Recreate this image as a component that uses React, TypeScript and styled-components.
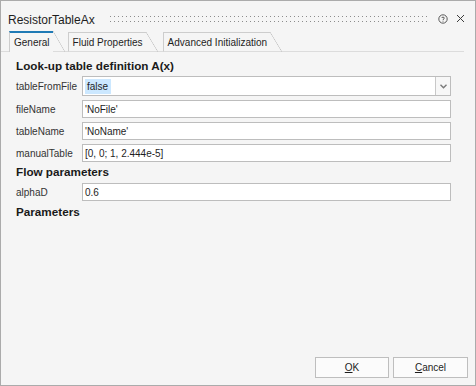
import React from "react";
import styled, { createGlobalStyle } from "styled-components";

const Global = createGlobalStyle`
  html, body { margin: 0; padding: 0; background: #f5f5f5; }
  * { box-sizing: border-box; }
`;

const Window = styled.div`
  width: 476px;
  height: 386px;
  border: 1px solid #ababab;
  background: #f5f5f5;
  display: flex;
  flex-direction: column;
  font-family: "Liberation Sans", Arial, sans-serif;
  font-size: 10px;
  color: #2b2b2b;
`;

const TitleBar = styled.div`
  height: 30px;
  padding: 5px 10px 0 7px;
  display: flex;
  align-items: center;
`;

const Title = styled.div`
  font-size: 12px;
  line-height: 14px;
  color: #1e1e1e;
  margin-top: 3px;
`;

const Grip = styled.svg`
  flex: 1;
  height: 6px;
  margin: 0 8px 0 15px;
`;

const IconBtn = styled.svg<{ $gap?: number }>`
  flex: 0 0 auto;
  margin-left: ${(p) => p.$gap ?? 0}px;
`;

const TabStrip = styled.div`
  height: 21px;
  padding-left: 8px;
  display: flex;
  align-items: flex-end;
  background: linear-gradient(#dcdcdc, #dcdcdc) no-repeat 0 100% / 463px 1px;
`;

const Tab = styled.div<{ $active?: boolean; $gap: number }>`
  position: relative;
  height: ${(p) => (p.$active ? 21 : 20)}px;
  padding: 0 3px 0 4px;
  margin-right: ${(p) => p.$gap}px;
  display: flex;
  align-items: center;
  white-space: nowrap;
  background: #f5f5f5;
  border-left: 1px solid #cdcdcd;
  border-top: ${(p) => (p.$active ? "2px solid #1f7ab5" : "1px solid #cdcdcd")};
  border-bottom: ${(p) => (p.$active ? "none" : "1px solid #dcdcdc")};
  color: #1e1e1e;
  padding-top: ${(p) => (p.$active ? 0 : 1)}px;

  &::after {
    content: "";
    position: absolute;
    top: ${(p) => (p.$active ? -2 : -1)}px;
    bottom: ${(p) => (p.$active ? 0 : -1)}px;
    right: -12px;
    width: 12px;
    background: linear-gradient(
      to top right,
      transparent calc(50% - 0.6px),
      #c6c6c6 50%,
      transparent calc(50% + 0.6px)
    );
  }
`;

const Content = styled.div`
  padding: 7px 24px 0 15px;
  display: flex;
  flex-direction: column;
  gap: 4px;
`;

const Heading = styled.div<{ $mt?: number; $mb?: number }>`
  font-size: 11.7px;
  font-weight: bold;
  line-height: 14px;
  color: #1a1a1a;
  margin-top: ${(p) => p.$mt ?? 0}px;
  margin-bottom: ${(p) => p.$mb ?? 0}px;
`;

const Row = styled.div`
  display: grid;
  grid-template-columns: 66px 1fr;
  align-items: center;
`;

const Label = styled.div`
  color: #333;
  white-space: nowrap;
`;

const Field = styled.div<{ $h: number }>`
  height: ${(p) => p.$h}px;
  border: 1px solid #bdbdbd;
  background: #fff;
  display: flex;
  align-items: center;
  padding-left: 2px;
  color: #1e1e1e;
`;

const Selected = styled.span`
  background: #cce8ff;
  padding: 2px 3px 2px 2px;
`;

const ComboText = styled.div`
  flex: 1;
  display: flex;
  align-items: center;
`;

const DropButton = styled.div`
  width: 15px;
  align-self: stretch;
  border-left: 1px solid #c8c8c8;
  display: flex;
  align-items: center;
  justify-content: center;
  background: #f7f7f7;
`;

const Footer = styled.div`
  margin-top: auto;
  padding: 0 7px 7px 0;
  display: flex;
  justify-content: flex-end;
  gap: 4px;
`;

const Button = styled.button<{ $w: number }>`
  width: ${(p) => p.$w}px;
  height: 21px;
  border: 1px solid #bebebe;
  background: #fbfbfb;
  font-family: "Liberation Sans", Arial, sans-serif;
  font-size: 10px;
  color: #1e1e1e;
  padding: 0;
`;

const rows: { label: string; value: string }[] = [
  { label: "fileName", value: "'NoFile'" },
  { label: "tableName", value: "'NoName'" },
  { label: "manualTable", value: "[0, 0; 1, 2.444e-5]" },
];

export default function App() {
  return (
    <>
      <Global />
      <Window>
        <TitleBar>
          <Title>ResistorTableAx</Title>
          <Grip>
            <defs>
              <pattern id="dots" width="4" height="5" patternUnits="userSpaceOnUse">
                <rect x="0" y="0" width="1" height="1" fill="#8c8c8c" />
              </pattern>
            </defs>
            <rect width="100%" height="6" fill="url(#dots)" />
          </Grip>
          <IconBtn width="10" height="10" viewBox="0 0 10 10">
            <circle cx="5" cy="5" r="4.2" fill="none" stroke="#4a4a4a" strokeWidth="0.9" />
            <path
              d="M3.6 4 C3.6 2.9 6.4 2.9 6.4 4 C6.4 4.9 5 4.9 5 6"
              fill="none"
              stroke="#4a4a4a"
              strokeWidth="0.9"
            />
            <rect x="4.55" y="6.7" width="0.9" height="0.9" fill="#4a4a4a" />
          </IconBtn>
          <IconBtn $gap={8} width="9" height="9" viewBox="0 0 9 9">
            <path d="M1 1 L8 8 M8 1 L1 8" stroke="#3c3c3c" strokeWidth="1" />
          </IconBtn>
        </TitleBar>

        <TabStrip>
          <Tab $active $gap={15}>General</Tab>
          <Tab $gap={17}>Fluid Properties</Tab>
          <Tab $gap={12}>Advanced Initialization</Tab>
        </TabStrip>

        <Content>
          <Heading $mb={-1}>Look-up table definition A(x)</Heading>
          <Row>
            <Label>tableFromFile</Label>
            <Field $h={20}>
              <ComboText>
                <Selected>false</Selected>
              </ComboText>
              <DropButton>
                <svg width="7" height="5" viewBox="0 0 7 5">
                  <path d="M0.5 0.8 L3.5 3.8 L6.5 0.8" fill="none" stroke="#7a7a7a" strokeWidth="1.4" />
                </svg>
              </DropButton>
            </Field>
          </Row>
          {rows.map((r) => (
            <Row key={r.label}>
              <Label>{r.label}</Label>
              <Field $h={18}>{r.value}</Field>
            </Row>
          ))}
          <Heading $mt={-1}>Flow parameters</Heading>
          <Row>
            <Label>alphaD</Label>
            <Field $h={18}>0.6</Field>
          </Row>
          <Heading>Parameters</Heading>
        </Content>

        <Footer>
          <Button $w={74}>
            <u>O</u>K
          </Button>
          <Button $w={75}>
            <u>C</u>ancel
          </Button>
        </Footer>
      </Window>
    </>
  );
}
